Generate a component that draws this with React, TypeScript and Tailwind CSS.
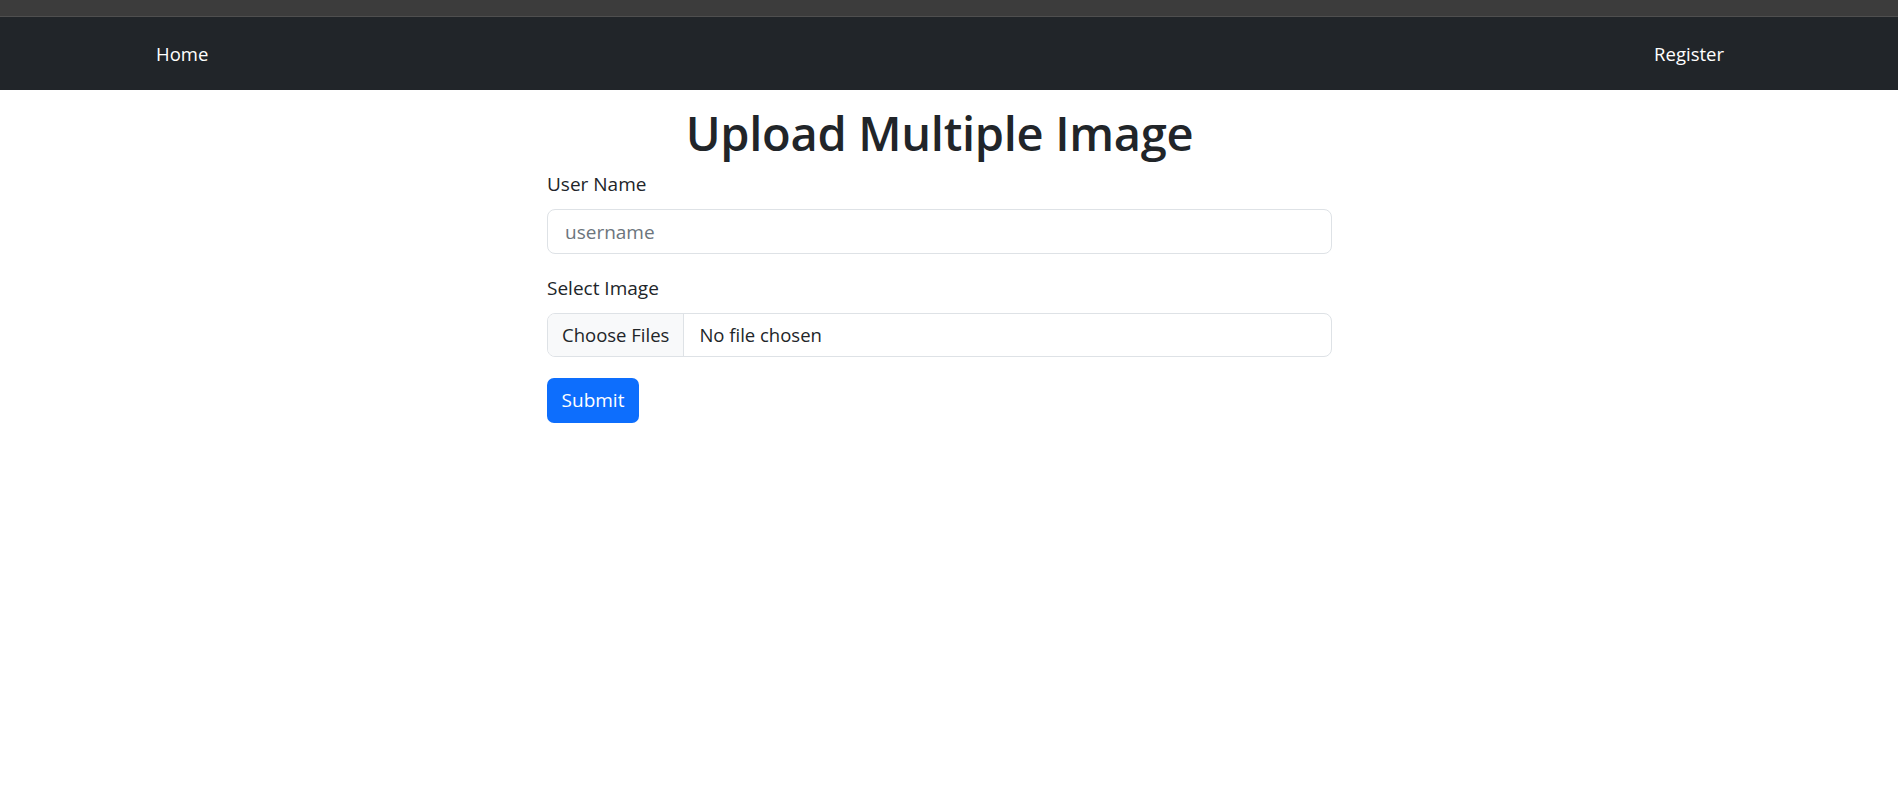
import React, { useState } from 'react';

const App: React.FC = () => {
  const [userName, setUserName] = useState('');

  return (
    <div className="min-h-screen bg-white font-['Open_Sans',sans-serif] text-[#212529]">
      <div className="h-[17px] bg-[#3c3c3c] border-b border-[#4f4f4f]" />
      <nav className="h-[73px] bg-[#212529] flex items-center justify-between pl-[156px] pr-[174px] text-[18.5px] text-white">
        <a href="#" className="leading-[30px]">Home</a>
        <a href="#" className="leading-[30px]">Register</a>
      </nav>
      <main className="flex justify-center pr-[19px]">
        <form className="w-[785px]" onSubmit={(e) => e.preventDefault()}>
          <h1 className="mt-[13px] mb-[6px] text-center text-[47px] leading-[60px] font-semibold tracking-[-0.3px]">
            Upload Multiple Image
          </h1>
          <label className="block text-[19px] leading-[30px] mb-[10px]" htmlFor="username">
            User Name
          </label>
          <input
            id="username"
            type="text"
            value={userName}
            onChange={(e) => setUserName(e.target.value)}
            placeholder="username"
            className="block w-full h-[45px] px-[17px] text-[19px] border border-[#dee2e6] rounded-[8px] placeholder:text-[#6c757d] focus:outline-none"
          />
          <label className="block mt-[19px] text-[19px] leading-[30px] mb-[10px]">
            Select Image
          </label>
          <label className="flex w-full h-[44px] border border-[#dee2e6] rounded-[8px] overflow-hidden text-[18.5px] cursor-pointer">
            <span className="flex items-center px-[14px] bg-[#f8f9fa] border-r border-[#dee2e6]">Choose Files</span>
            <span className="flex items-center pl-[15px]">No file chosen</span>
            <input type="file" multiple className="hidden" />
          </label>
          <button
            type="submit"
            className="mt-[21px] h-[45px] w-[92px] bg-[#0d6efd] text-white text-[19px] rounded-[7px]"
          >
            Submit
          </button>
        </form>
      </main>
    </div>
  );
};

export default App;
